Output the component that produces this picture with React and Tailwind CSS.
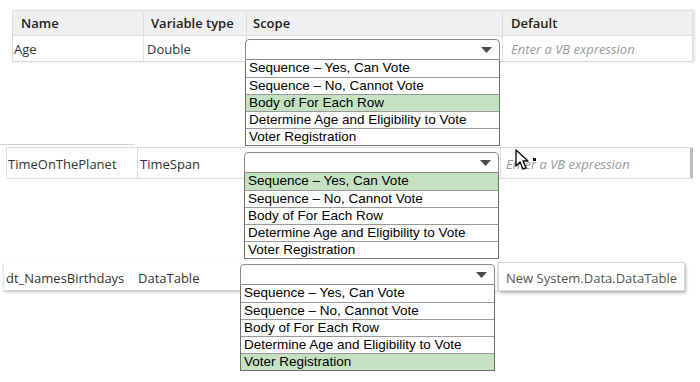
import React from 'react'

const items = [
  'Sequence – Yes, Can Vote',
  'Sequence – No, Cannot Vote',
  'Body of For Each Row',
  'Determine Age and Eligibility to Vote',
  'Voter Registration',
]

const ScopeDropdown = ({ selected, className }) => (
  <div className={`absolute w-[255px] ${className}`}>
    <div className="h-[21px] bg-white border border-[#8a8a8a] rounded-t-[4px] flex items-center justify-end pr-[7px]">
      <svg width="11" height="6" viewBox="0 0 11 6">
        <path d="M0 0 L11 0 L5.5 6 Z" fill="#4a4a4a" />
      </svg>
    </div>
    <div className="bg-white border-x border-b border-[#6f6f6f] font-['Liberation_Sans',Arial,sans-serif] text-[13.5px] text-black">
      {items.map((item, i) => (
        <div
          key={item}
          className={`h-[17px] leading-[16px] pl-[3px] border-[#9a9a9a] ${i > 0 ? 'border-t' : ''} ${
            i === selected ? 'bg-[#c4e2c2]' : 'bg-white'
          }`}
        >
          {item}
        </div>
      ))}
    </div>
  </div>
)

const App = () => {
  return (
    <div className="relative w-[700px] h-[382px] overflow-hidden bg-white font-['Open_Sans',sans-serif] text-[13px] text-[#333]">
      {/* Block 1: header + Age row */}
      <div className="pt-[10px] pl-[12px]">
        <div className="w-[681px] border-t border-l border-[#dedede] shadow-[2px_0_2px_rgba(0,0,0,0.12)]">
          <div className="flex h-[25px] pt-[2px] bg-[#f0f0f0] border-b border-[#dedede] font-semibold text-[#222]">
            <div className="w-[131px] pl-[8px] flex items-center border-r border-[#dedede]">Name</div>
            <div className="w-[103px] pl-[7px] flex items-center border-r border-[#dedede]">Variable type</div>
            <div className="w-[256px] pl-[6px] flex items-center border-r border-[#dedede]">Scope</div>
            <div className="flex-1 pl-[8px] flex items-center border-r border-[#dedede]">Default</div>
          </div>
          <div className="flex h-[26px] border-b border-[#d8d8d8]">
            <div className="w-[131px] pl-[1px] pt-[3px] flex items-center border-r border-[#e2e2e2]">Age</div>
            <div className="w-[103px] pl-[3px] pt-[3px] flex items-center border-r border-[#e2e2e2]">Double</div>
            <div className="relative w-[256px] border-r border-[#e2e2e2]">
              <ScopeDropdown selected={2} className="left-[-2px] top-[3px]" />
            </div>
            <div className="flex-1 pl-[8px] pt-[3px] flex items-center italic text-[#9a9a9a] border-r border-[#dedede]">
              Enter a VB expression
            </div>
          </div>
        </div>
      </div>

      <div className="mt-[82px] h-[1px] w-[135px] bg-[#d4d4d4]" />

      {/* Block 2: TimeOnThePlanet */}
      <div className="mt-[2px] pl-[6px]">
        <div className="flex h-[32px] w-[687px] border-t border-l border-b border-[#dcdcdc]">
          <div className="w-[131px] pl-[1px] pt-[3px] flex items-center border-r border-[#dcdcdc]">TimeOnThePlanet</div>
          <div className="w-[103px] pl-[2px] pt-[3px] flex items-center">TimeSpan</div>
          <div className="relative w-[259px]">
            <ScopeDropdown selected={0} className="left-[3px] top-[4px]" />
          </div>
          <div className="flex-1 pl-[5px] pt-[3px] flex items-center italic text-[#9a9a9a] border-l border-[#dcdcdc] border-r-[3px] border-r-[#bdbdbd]">
            Enter a VB expression
          </div>
        </div>
      </div>

      {/* Block 3: dt_NamesBirthdays */}
      <div className="mt-[82px] pl-[4px]">
        <div className="flex h-[29px] w-[690px]">
          <div className="flex w-[493px] bg-white shadow-[0_2px_3px_rgba(0,0,0,0.25)]">
            <div className="w-[130px] pl-[2px] pt-[6px] flex items-center">dt_NamesBirthdays</div>
            <div className="w-[103px] pl-[4px] pt-[6px] flex items-center">DataTable</div>
            <div className="relative flex-1">
              <ScopeDropdown selected={4} className="left-[3px] top-[3px]" />
            </div>
          </div>
          <div className="w-[187px] ml-[1px] mt-[1px] h-[29px] pl-[7px] pt-[4px] flex items-center text-[#555] bg-white border border-[#d8d8d8] shadow-[1px_2px_3px_rgba(0,0,0,0.3)]">
            New System.Data.DataTable
          </div>
        </div>
      </div>

      {/* mouse cursor */}
      <svg className="absolute left-[515px] top-[149px]" width="28" height="24" viewBox="0 0 28 24">
        <path d="M1 1 L1 17 L5 13 L8 20 L11 19 L8 12 L13 12 Z" fill="#fff" stroke="#111" strokeWidth="1.4" strokeLinejoin="round" />
        <rect x="18" y="9" width="3" height="3" fill="#111" />
      </svg>
    </div>
  )
}

export default App
